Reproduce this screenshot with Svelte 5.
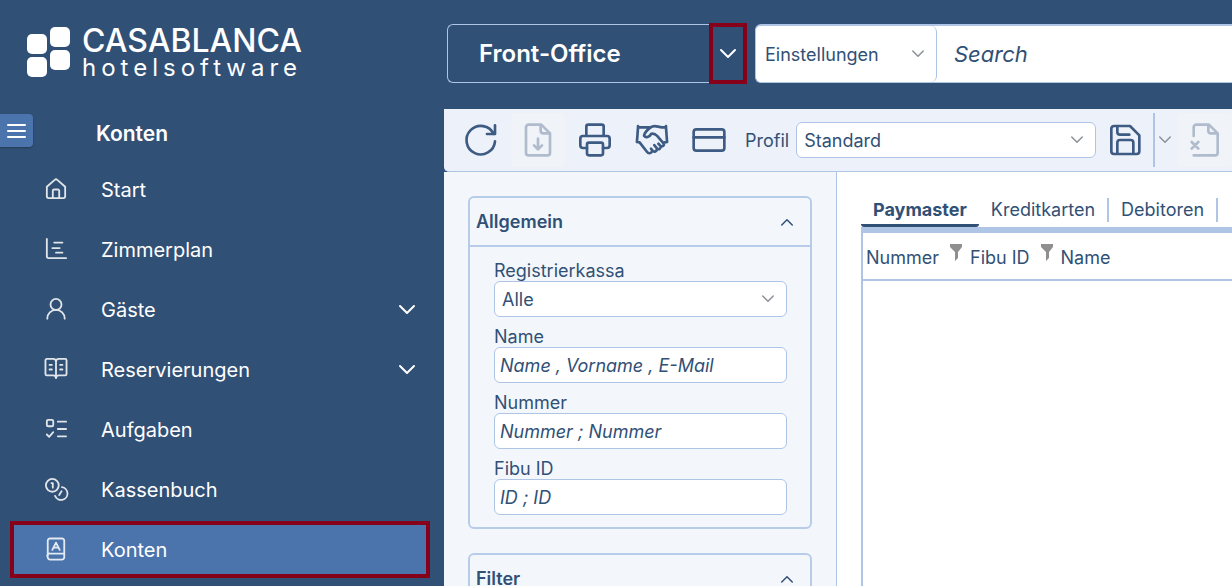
<script lang="ts">
  type Item = { label: string; icon: string; children?: boolean };

  const items: Item[] = [
    { label: 'Start', icon: 'home' },
    { label: 'Zimmerplan', icon: 'plan' },
    { label: 'Gäste', icon: 'user', children: true },
    { label: 'Reservierungen', icon: 'book', children: true },
    { label: 'Aufgaben', icon: 'tasks' },
    { label: 'Kassenbuch', icon: 'coins' },
    { label: 'Konten', icon: 'accounts' },
  ];

  const fields = [
    { id: 'name', label: 'Name', hint: 'Name , Vorname , E-Mail' },
    { id: 'nummer', label: 'Nummer', hint: 'Nummer ; Nummer' },
    { id: 'fibu', label: 'Fibu ID', hint: 'ID ; ID' },
  ];

  const tools = [
    { icon: 'refresh', label: 'Aktualisieren', disabled: false },
    { icon: 'export', label: 'Exportieren', disabled: true },
    { icon: 'print', label: 'Drucken', disabled: false },
    { icon: 'handshake', label: 'Vereinbarung', disabled: false },
    { icon: 'card', label: 'Kreditkarte', disabled: false },
  ];

  const tabs = ['Paymaster', 'Kreditkarten', 'Debitoren'];

  let current = $state('Konten');
  let activeTab = $state('Paymaster');
</script>

{#snippet icon(name: string)}
  <svg class="icon" viewBox="0 0 24 24" aria-hidden="true">
    {#if name === 'home'}
      <path d="M2 9.5 10.6 2a2 2 0 0 1 2.8 0L22 9.5V20a2 2 0 0 1-2 2H4a2 2 0 0 1-2-2z" />
      <path d="M8.5 22v-8a1.500 1.500 0 0 1 1.500-1.500h4a1.500 1.500 0 0 1 1.500 1.500v8" />
    {:else if name === 'plan'}
      <path d="M2 1v19a2 2 0 0 0 2 2h19M10 5h9M8 11h8M12 16h7" />
    {:else if name === 'user'}
      <circle cx="12" cy="7" r="6" />
      <path d="M2.5 22.500a9.500 9.500 0 0 1 19 0" />
    {:else if name === 'book'}
      <path d="M12 4a3 3 0 0 0-3-3H2a1.500 1.500 0 0 0-1.500 1.500v15A1.500 1.500 0 0 0 2 19h7a3 3 0 0 1 3 3 3 3 0 0 1 3-3h7a1.500 1.500 0 0 0 1.500-1.500v-15A1.500 1.500 0 0 0 22 1h-7a3 3 0 0 0-3 3v18M5 7.500h2.500M5 12.500h2.500M16.500 7.500H19M16.500 12.500H19" />
    {:else if name === 'tasks'}
      <rect x="2" y="2" width="7" height="7" rx="1.5" />
      <path d="m2 18 2.500 2.500L9 15.500M14 4h9M14 12h9M14 20h9" />
    {:else if name === 'coins'}
      <circle cx="8" cy="8" r="7" />
      <path d="M7 5.500h1.500v5M18.500 10a7 7 0 1 1-7.500 9.500M18 14.500l-2.500 4" />
    {:else if name === 'accounts'}
      <path d="M3 20V3A2.500 2.500 0 0 1 5.500.5h13A2.500 2.500 0 0 1 21 3v18a2.500 2.500 0 0 1-2.500 2.500h-13A2.500 2.500 0 0 1 3 21 2.500 2.500 0 0 1 5.500 17H21M8 13l4-8 4 8M9.500 10.500h5" />
    {:else if name === 'refresh'}
      <path d="M22.500 1v6.500h-6M21.500 7.500A10.700 10.700 0 1 0 22.500 13" />
    {:else if name === 'export'}
      <path d="M14.500.5H5A2 2 0 0 0 3 2.500v19a2 2 0 0 0 2 2h14a2 2 0 0 0 2-2V7zM14 .5V5a2 2 0 0 0 2 2h5M12 11v8m-3-3 3 3 3-3" />
    {:else if name === 'print'}
      <path d="M6 18H3a2 2 0 0 1-2-2v-5a2 2 0 0 1 2-2h18a2 2 0 0 1 2 2v5a2 2 0 0 1-2 2h-3M5.500 9V2A1.500 1.500 0 0 1 7 .5h10A1.500 1.500 0 0 1 18.500 2v7" />
      <rect x="6" y="14" width="12" height="9.5" rx="1.5" />
    {:else if name === 'handshake'}
      <path d="M1.500 1.500v1L.7 13.500l2 .3 5.500 7c1 1.500 2.600 1.500 3.600.2M1.500 2.500H10M22.500 1.500v1l.8 11-2.500.5M22.500 2.500h-3c-3 0-5.500-2.300-8.500 0C8.500 4.300 6.300 7 6 8.800c1.300 1.800 4 1.200 5.500-1.500 1.800-.3 3.200.3 4.200 1.500l4.800 5.500c1 1.600-.2 3-2 2.300l-1.700-1.800M18.500 16.600c.3 2-1.300 3-2.800 1.700l-2-2.500M15.700 18.300c.2 2-1.800 3.200-3.300 1.700l-1.200-1.500" />
    {:else if name === 'card'}
      <rect x="0.5" y="4" width="23" height="16" rx="2" />
      <path d="M.5 10h23" />
    {:else if name === 'save'}
      <path d="M3 1.500h12l7 7v12a2 2 0 0 1-2 2H3a2 2 0 0 1-2-2v-17a2 2 0 0 1 2-2zM5.500 22.500V14a2 2 0 0 1 2-2h8a2 2 0 0 1 2 2v8.500M5.500 1.500V6a2 2 0 0 0 2 2h7" />
    {:else if name === 'remove'}
      <path d="M3.500 9V2.500a2 2 0 0 1 2-2H15L21.500 7v14.500a2 2 0 0 1-2 2h-16M14.500.5V5a2 2 0 0 0 2 2h5M2 13.500l5 5M7 13.500l-5 5" />
    {/if}
  </svg>
{/snippet}

{#snippet chevron(up = false)}
  <svg class="chevron" class:up viewBox="0 0 16 16" aria-hidden="true">
    <path d="m1 4 7 7 7-7" />
  </svg>
{/snippet}

<div class="app">
  <aside class="sidebar">
    <a class="logo" href="#start" aria-label="Casablanca Hotelsoftware">
      <svg class="mark" viewBox="0 0 44 52" aria-hidden="true">
        <rect x="0" y="8" width="20" height="20" rx="5" />
        <rect x="23" y="1" width="20" height="20" rx="5" />
        <rect x="0" y="31" width="20" height="20" rx="5" />
        <rect x="23" y="24" width="20" height="20" rx="5" />
      </svg>
      <span class="wordmark">
        <span class="brand">CASABLANCA</span>
        <span class="sub">hotelsoftware</span>
      </span>
    </a>

    <div class="section">
      <button class="burger" aria-label="Menü">
        <svg viewBox="0 0 20 16" aria-hidden="true"><path d="M1 2h17M1 8h17M1 14h17" /></svg>
      </button>
      <h1>Konten</h1>
    </div>

    <nav>
      {#each items as item}
        <a
          class="item"
          class:active={current === item.label}
          href="#{item.icon}"
          onclick={() => (current = item.label)}
        >
          {@render icon(item.icon)}
          <span>{item.label}</span>
          {#if item.children}{@render chevron()}{/if}
        </a>
      {/each}
    </nav>
  </aside>

  <div class="content">
    <header class="topbar">
      <div class="office">
        <button class="office-name">Front-Office</button>
        <button class="office-toggle" aria-label="Bereich wechseln">{@render chevron()}</button>
      </div>
      <div class="search">
        <div class="select scope">
          <select aria-label="Suchbereich"><option>Einstellungen</option></select>
          {@render chevron()}
        </div>
        <input type="search" placeholder="Search" aria-label="Search" />
      </div>
    </header>

    <div class="toolbar">
      {#each tools as tool}
        <button class="tool" disabled={tool.disabled} aria-label={tool.label}>
          {@render icon(tool.icon)}
        </button>
      {/each}
      <div class="profile">
        <label for="profil">Profil</label>
        <div class="select">
          <select id="profil"><option>Standard</option></select>
          {@render chevron()}
        </div>
      </div>
      <div class="save">
        <button class="tool" aria-label="Speichern">{@render icon('save')}</button>
        <button class="more" aria-label="Weitere Optionen">{@render chevron()}</button>
      </div>
      <button class="tool" disabled aria-label="Löschen">{@render icon('remove')}</button>
    </div>

    <div class="workspace">
      <section class="filters">
        <div class="panel">
          <button class="panel-head">Allgemein {@render chevron(true)}</button>
          <div class="panel-body">
            <div class="field">
              <label for="kassa">Registrierkassa</label>
              <div class="select">
                <select id="kassa"><option>Alle</option></select>
                {@render chevron()}
              </div>
            </div>
            {#each fields as field}
              <div class="field">
                <label for={field.id}>{field.label}</label>
                <input id={field.id} type="text" placeholder={field.hint} />
              </div>
            {/each}
          </div>
        </div>
        <div class="panel">
          <button class="panel-head">Filter {@render chevron(true)}</button>
        </div>
      </section>

      <main>
        <div class="tabs" role="tablist">
          {#each tabs as tab}
            <button
              role="tab"
              class:active={activeTab === tab}
              aria-selected={activeTab === tab}
              onclick={() => (activeTab = tab)}
            ><span>{tab}</span></button>
          {/each}
        </div>
        <div class="grid">
          <table>
            <thead>
              <tr>
                {#each ['Nummer', 'Fibu ID', 'Name'] as column, i}
                  <th>
                    <div class="column">
                      {column}
                      {#if i < 2}
                        <svg class="funnel" viewBox="0 0 12 17" aria-hidden="true">
                          <path d="M0 0h12v3L8 8v6l-3 3V8L0 3z" />
                        </svg>
                      {/if}
                    </div>
                  </th>
                {/each}
              </tr>
            </thead>
          </table>
        </div>
      </main>
    </div>
  </div>
</div>

<style>
  :global(body) {
    margin: 0;
    overflow: hidden;
  }

  .app {
    --navy: #315076;
    --line: #aec5e6;
    --marker: #87001a;
    display: grid;
    grid-template-columns: 444px minmax(0, 1fr);
    height: 100vh;
    overflow: hidden;
    background: var(--navy);
    color: var(--navy);
    font: 18px/22px Inter, "Liberation Sans", sans-serif;
  }

  .app * { box-sizing: border-box; }

  button, input, select {
    margin: 0;
    padding: 0;
    border: 0;
    background: none;
    color: inherit;
    font: inherit;
  }

  button { cursor: pointer; }
  a { color: inherit; text-decoration: none; }

  .icon, .chevron {
    flex: none;
    overflow: visible;
    fill: none;
    stroke: currentColor;
    stroke-width: 2;
    stroke-linecap: round;
    stroke-linejoin: round;
  }

  .chevron { width: 16px; height: 16px; }
  .chevron.up { transform: rotate(180deg); }

  /* sidebar */
  .sidebar { color: #fff; }

  .logo {
    display: flex;
    align-items: center;
    gap: 11px;
    height: 110px;
    padding: 0 0 6px 27px;
  }

  .mark { width: 44px; height: 52px; fill: #fff; }
  .wordmark { display: grid; padding-top: 4px; }
  .brand { font-size: 32px; font-weight: 500; line-height: 28px; }
  .sub { font-size: 24px; line-height: 26px; letter-spacing: 5px; }

  .section {
    display: flex;
    align-items: center;
    gap: 63px;
    height: 51px;
    padding-bottom: 10px;
  }

  .burger {
    display: grid;
    place-items: center;
    width: 33px;
    height: 33px;
    border-radius: 0 4px 4px 0;
    background: #4b74ad;
    box-shadow: 0 1px 2px #0004;
  }

  .burger svg { width: 20px; height: 16px; stroke: #fff; stroke-width: 2; stroke-linecap: round; }

  h1 { margin: 0; padding-top: 6px; font-size: 21px; font-weight: 600; line-height: 28px; }

  nav { display: grid; gap: 3px; padding: 0 14px 0 10px; }

  .item {
    display: flex;
    align-items: center;
    gap: 34px;
    height: 57px;
    padding: 0 11px 0 31px;
    border: 4px solid transparent;
    font-size: 20px;
    line-height: 28px;
  }

  .item.active { background: #4b74ad; border-color: var(--marker); }
  .item .icon { width: 22px; height: 22px; margin-bottom: 2px; opacity: 0.85; }
  .item .chevron { margin-left: auto; }

  /* top bar */
  .content {
    display: flex;
    flex-direction: column;
    min-width: 0;
  }

  .topbar {
    display: flex;
    align-items: center;
    gap: 8px;
    height: 109px;
    padding: 0 0 2px 3px;
    flex: none;
  }

  .office {
    display: flex;
    align-items: center;
    width: 300px;
    height: 59px;
    border: 1px solid var(--line);
    border-right: 0;
    border-radius: 6px;
    color: #fff;
  }

  .office-name { flex: 1; padding-left: 31px; text-align: left; font-size: 24px; font-weight: 600; }

  .office-toggle {
    display: grid;
    place-items: center;
    width: 38px;
    height: 61px;
    border: 4px solid var(--marker);
  }

  .search {
    display: flex;
    flex: 1;
    min-width: 0;
    height: 59px;
    border: 1px solid var(--line);
    border-width: 2px 0 1px 1px;
    border-radius: 6px 0 0 6px;
    background: #fff;
  }

  .search input { flex: 1; min-width: 0; padding-left: 17px; font-size: 22px; }

  input::placeholder { color: var(--navy); font-style: italic; opacity: 1; }

  .select { display: grid; align-items: center; }

  .select select {
    grid-area: 1 / 1;
    width: 100%;
    height: 36px;
    padding: 1px 36px 0 7px;
    border: 1px solid var(--line);
    border-radius: 6px;
    background: #fff;
    appearance: none;
  }

  .select .chevron {
    grid-area: 1 / 1;
    justify-self: end;
    width: 12px;
    height: 12px;
    margin-right: 13px;
    color: #8c9097;
    pointer-events: none;
  }

  .select.scope { width: 181px; }
  .select.scope select { height: 56px; padding-left: 9px; border-width: 0 1px 0 0; }

  /* toolbar */
  .toolbar {
    display: flex;
    flex: none;
    align-items: center;
    gap: 3px;
    height: 63px;
    padding-left: 10px;
    border-bottom: 1px solid var(--line);
    border-bottom-left-radius: 5px;
    background: #edf2fa;
  }

  .tool {
    display: grid;
    flex: none;
    place-items: center;
    width: 54px;
    height: 54px;
    border-radius: 4px;
    color: #3d5b83;
  }

  .tool .icon { width: 32px; height: 32px; }
  .tool:disabled { background: #f0f3f8; color: #b0bccd; }

  .profile { display: flex; flex: none; align-items: center; gap: 7px; padding-left: 6px; }
  .profile label { padding-top: 2px; }
  .profile .select { width: 300px; }

  .save { display: flex; flex: none; }

  .more {
    display: grid;
    place-items: center;
    width: 22px;
    border-left: 2px solid var(--line);
    color: #8c9097;
  }

  .more .chevron { width: 12px; height: 12px; }

  /* filters */
  .workspace {
    display: flex;
    flex: 1;
    min-height: 0;
    background: #fff;
  }

  .filters {
    flex: none;
    width: 393px;
    padding: 24px;
    border-right: 1px solid var(--line);
    background: #f3f7fc;
  }

  .panel {
    margin-bottom: 24px;
    border: 2px solid #b7cce9;
    border-radius: 6px;
  }

  .panel-head {
    display: flex;
    align-items: center;
    justify-content: space-between;
    width: 100%;
    height: 47px;
    padding: 0 17px 0 6px;
    font-weight: 600;
  }

  .panel-head .chevron { width: 12px; height: 12px; }

  .panel-body {
    display: grid;
    gap: 10px;
    padding: 14px 23px 12px 24px;
    border-top: 2px solid #b7cce9;
  }

  .field { display: grid; }
  .field label { line-height: 20px; }

  .field input {
    width: 100%;
    height: 36px;
    padding: 0 5px;
    border: 1px solid var(--line);
    border-radius: 6px;
    background: #fff;
  }

  /* account list */
  main {
    display: flex;
    flex: 1;
    flex-direction: column;
    min-width: 0;
    padding: 20px 0 0 24px;
  }

  .tabs { display: flex; height: 35px; line-height: 24px; }
  .tabs button { padding: 6px 0 2px; border-bottom: 3px solid transparent; }
  .tabs span { display: block; padding: 0 12px; border-right: 2px solid var(--line); }

  .tabs button.active {
    border-color: var(--navy);
    border-radius: 3px;
    font-weight: 700;
  }

  .tabs .active span { border: 0; }

  .grid {
    flex: 1;
    border-top: 6px solid var(--line);
    border-left: 2px solid var(--line);
  }

  table { width: 100%; border-collapse: collapse; }
  tr { height: 47px; border-bottom: 2px solid var(--line); }
  th { width: 1px; padding: 3px 5px 0 3px; font-weight: 400; text-align: left; white-space: nowrap; }
  th:last-child { width: auto; }
  .column { display: flex; align-items: center; gap: 11px; }
  .funnel { width: 12px; height: 17px; margin-bottom: 10px; fill: #8f8f8f; }
</style>
